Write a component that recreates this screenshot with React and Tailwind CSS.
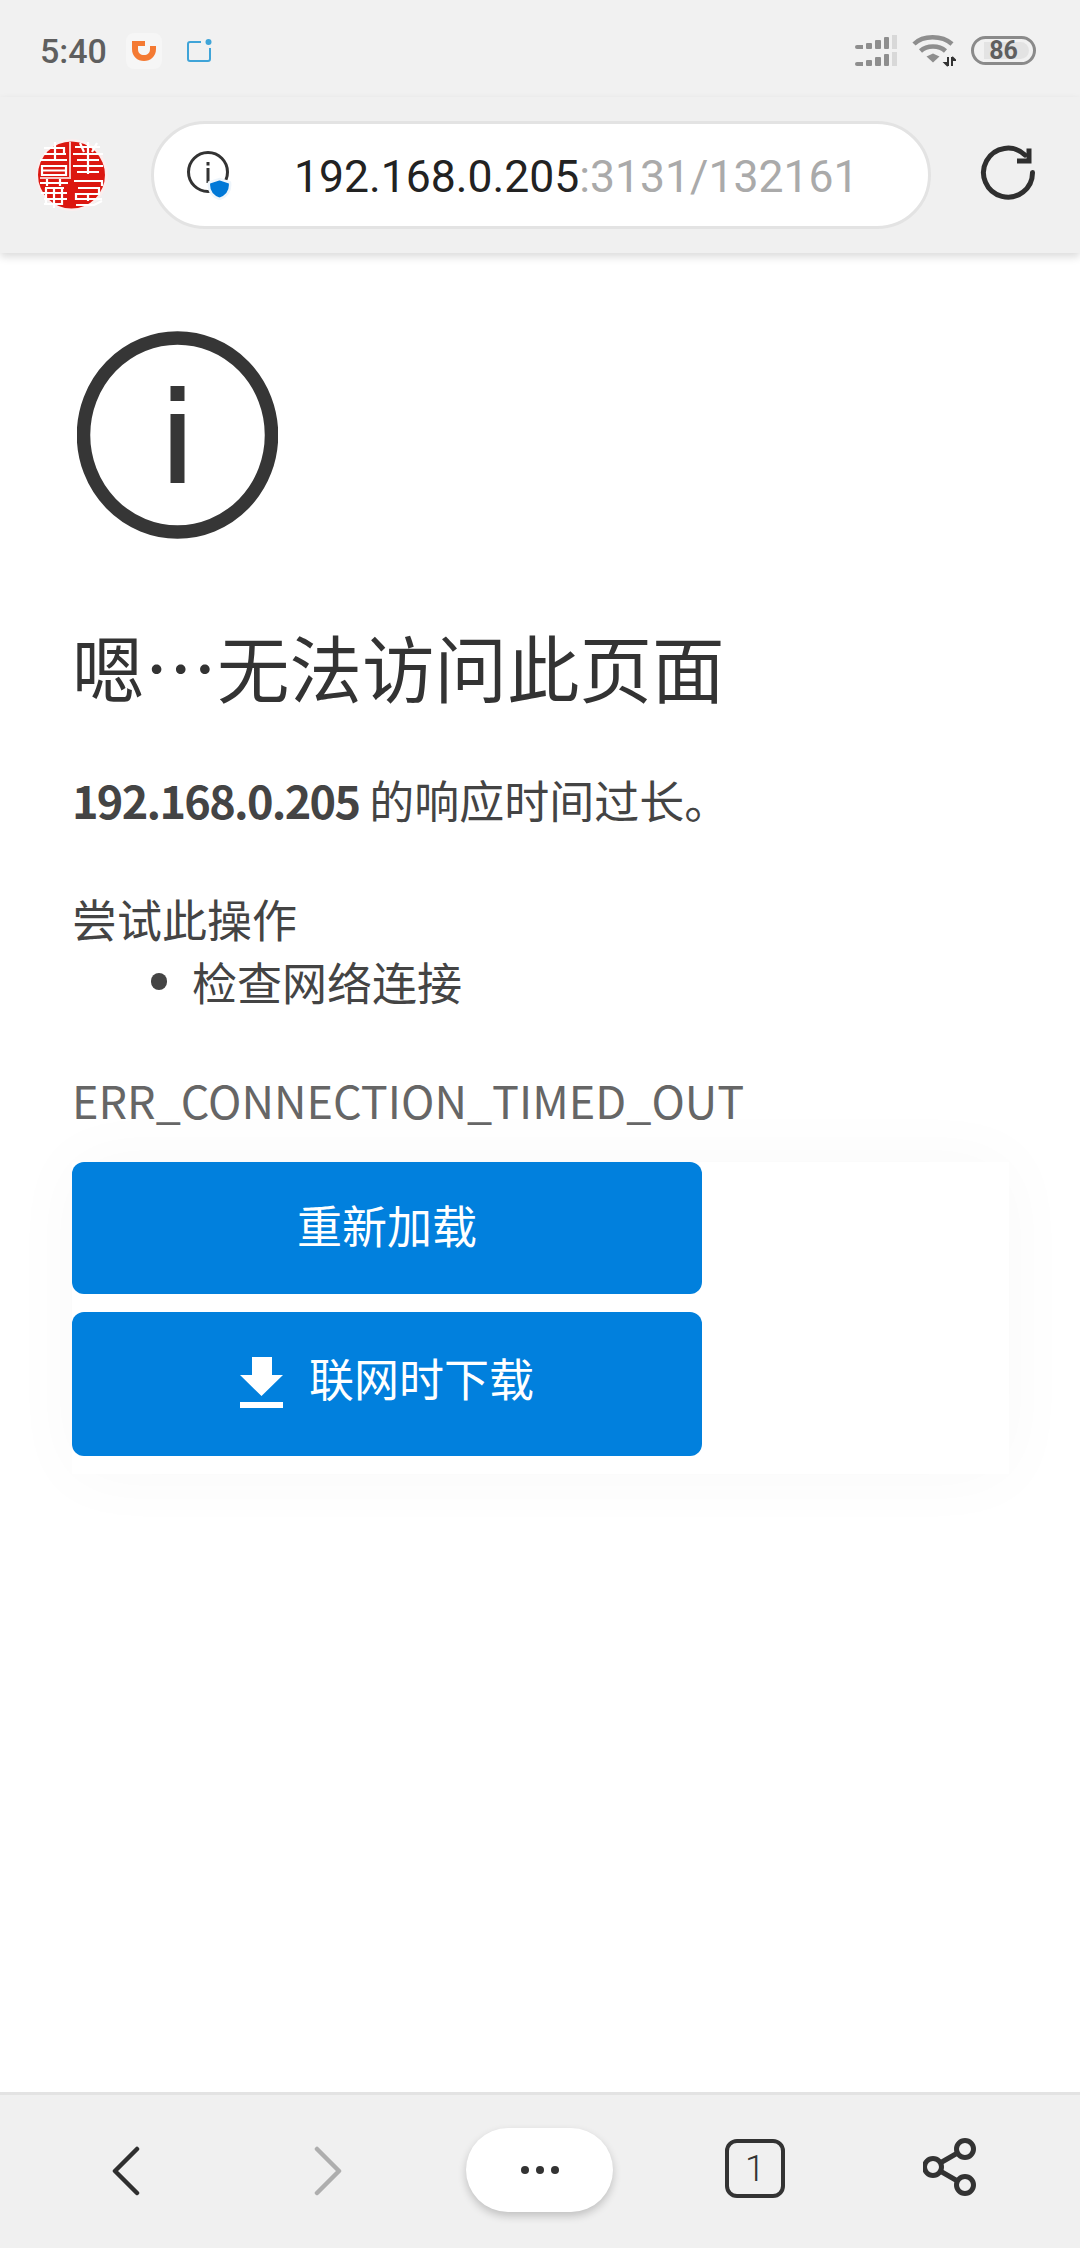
const cjk = "font-['Noto_Sans_CJK_SC','Noto_Sans',sans-serif]";

function SealLogo() {
  return (
    <svg width="72" height="72" viewBox="0 0 72 72" className="ml-[36px] shrink-0">
      <circle cx="36" cy="36" r="36" fill="#fbeeee" />
      <circle cx="35.500" cy="36" r="33.500" fill="#dc1710" />
      <g stroke="#ffffff" strokeWidth="2.200" fill="none">
        <path d="M34 3V40M4 39H33" strokeWidth="1.500" />
        <path d="M8 15H30M4 21H31M8 9H28V15M19 3V21M6 27H30V36H6ZM6 31.500H30" />
        <path d="M39 8H64M37 15H67M41 21H63M37 27H67M41 33H63M52 3V35M44 4L48 13M61 4L56 13" />
        <path d="M4 44H32M9 49H28M5 54H31M8 60H31M8 65H26M11 40V47M24 40V47M10 49V66M18 49V69M26 49V66" />
        <path d="M38 42H66V47M42 49H63V55H40V60H66M40 66H58L66 62M52 55V62" />
      </g>
    </svg>
  );
}

function InfoShield() {
  return (
    <svg width="46" height="50" viewBox="0 0 46 50" className="ml-[32px] shrink-0">
      <circle cx="22" cy="22" r="19.500" fill="none" stroke="#333333" strokeWidth="3" />
      <rect x="20.500" y="12" width="3" height="3.500" fill="#333333" />
      <rect x="20.500" y="18" width="3" height="15" fill="#333333" />
      <path d="M33.500 29l10.500 3.500c1 8-2.500 13.500-10.500 16.500-8-3-11.500-8.500-10.500-16.500z" fill="#0078d7" stroke="#eef5fb" strokeWidth="2.500" />
    </svg>
  );
}

function SignalRow() {
  return (
    <div className="flex items-end gap-[3px]">
      <span className="w-[8px] h-[4px] rounded-l-sm bg-[#8e8e8e]" />
      <span className="w-[6px] h-[6px] rounded-[1px] bg-[#8e8e8e]" />
      <span className="w-[6px] h-[9px] rounded-[1px] bg-[#8e8e8e]" />
      <span className="w-[5px] h-[12px] rounded-[1px] bg-[#8e8e8e]" />
      <span className="w-[5px] h-[14px] bg-[#d8d8d8]" />
    </div>
  );
}

function Wifi() {
  return (
    <svg width="44" height="34" viewBox="0 0 44 34" className="shrink-0">
      <g fill="none" stroke="#8e8e8e" strokeWidth="4.500">
        <path d="M2 10C11 1 30 1 40 10" />
        <path d="M8.500 17C15 11 27 11 33.500 17" />
      </g>
      <path d="M21 19.500l-6.500 3 6.500 6 6.500-6z" fill="#8e8e8e" />
      <path d="M36 23v9M36 32l-3-3h3M40 32v-9M40 23l3 3h-3" fill="none" stroke="#333333" strokeWidth="2" />
    </svg>
  );
}

function Reload() {
  return (
    <svg width="60" height="60" viewBox="0 0 60 60" className="shrink-0">
      <path d="M53.500 27.500a24.500 24.500 0 1 1-7.500-17.500" fill="none" stroke="#2f2f2f" strokeWidth="5" strokeLinecap="round" />
      <path d="M50 3.500V16H38" fill="none" stroke="#2f2f2f" strokeWidth="5" strokeLinejoin="miter" />
    </svg>
  );
}

function Chevron({ points, color }) {
  return (
    <svg width="30" height="50" viewBox="0 0 30 50" className="shrink-0">
      <polyline points={points} fill="none" stroke={color} strokeWidth="4.500" strokeLinecap="round" strokeLinejoin="round" />
    </svg>
  );
}

function Share() {
  return (
    <svg width="56" height="60" viewBox="0 0 56 60" className="shrink-0">
      <g fill="none" stroke="#333333" strokeWidth="5">
        <circle cx="42" cy="12" r="8.500" />
        <circle cx="10" cy="30" r="8.500" />
        <circle cx="42" cy="48" r="8.500" />
        <path d="M18 25.500L34.500 16M18 34.500L34.500 44" />
      </g>
    </svg>
  );
}

function DownloadIcon() {
  return (
    <svg width="43" height="51" viewBox="0 0 43 51" className="shrink-0 mt-[10px]">
      <path d="M12 0H32V18H43L21.500 39L0 18H12Z" fill="#ffffff" />
      <rect x="0" y="45" width="43" height="6" fill="#ffffff" />
    </svg>
  );
}

export default function App() {
  return (
    <div className={`w-[1080px] h-[2248px] flex flex-col bg-white overflow-hidden ${cjk}`}>
      {/* status bar */}
      <div className="h-[97px] shrink-0 bg-[#f1f1f1] flex items-center justify-between pl-[40px] pr-[42px] pt-[4px]">
        <div className="flex items-center">
          <span className="font-['Roboto',sans-serif] font-medium text-[34px] leading-none text-[#5f5f5f] w-[86px]">5:40</span>
          <div className="w-[36px] h-[36px] rounded-lg bg-[#f6f6f6] flex items-center justify-center">
            <svg width="26" height="22" viewBox="0 0 26 22">
              <path d="M1 1H14V6H7V9C7 13 9.500 15 13 15C16.500 15 19 13 19 9V6H25V9C25 16.500 19.500 21 13 21C6.500 21 1 16.500 1 9Z" fill="#f47a33" />
            </svg>
          </div>
          <svg width="26" height="24" viewBox="0 0 26 24" className="ml-[24px]">
            <path d="M15 3H4a2 2 0 0 0-2 2v15a2 2 0 0 0 2 2h18a2 2 0 0 0 2-2V9" fill="none" stroke="#3fa4d8" strokeWidth="2" />
            <circle cx="22.500" cy="3" r="3" fill="#3fa4d8" />
          </svg>
        </div>
        <div className="flex items-center mr-[2px]">
          <div className="flex flex-col gap-[3px]">
            <SignalRow />
            <SignalRow />
          </div>
          <div className="ml-[15px]">
            <Wifi />
          </div>
          <div className="ml-[15px] w-[65px] h-[29px] rounded-full border-[3px] border-[#8a8a8a] flex items-center justify-center relative">
            <div className="absolute left-[10px] right-[4px] top-[3px] bottom-[3px] rounded-r-full bg-[#e3e3e3]" />
            <span className="relative font-['Roboto',sans-serif] font-bold text-[25px] leading-none text-[#5f5f5f]">86</span>
          </div>
        </div>
      </div>

      {/* toolbar */}
      <div className="h-[156px] shrink-0 bg-[#f0f0f0] shadow-[0_4px_8px_rgba(0,0,0,0.14)] relative z-10 flex items-start pt-[24px]">
        <div className="h-[108px] flex items-center">
          <SealLogo />
        </div>
        <div className="ml-[43px] w-[780px] h-[108px] bg-white border-[3px] border-[#e3e3e3] rounded-full flex items-center">
          <InfoShield />
          <div className="ml-[62px] pt-[4px] font-['Roboto',sans-serif] text-[44.500px] leading-none whitespace-nowrap">
            <span className="text-[#222222]">192.168.0.205</span>
            <span className="text-[#aaaaaa]">:3131/132161</span>
          </div>
        </div>
        <div className="ml-[48px] h-[108px] flex items-center">
          <Reload />
        </div>
      </div>

      {/* error page */}
      <div className="flex-1 pl-[72px]">
        <svg width="201" height="208" viewBox="0 0 201 208" className="mt-[78px] ml-[5px] block">
          <ellipse cx="100.500" cy="104" rx="94" ry="97" fill="none" stroke="#363636" strokeWidth="13.500" />
          <rect x="93.500" y="55" width="14" height="15" fill="#363636" />
          <rect x="93.500" y="83" width="14" height="69" fill="#363636" />
        </svg>
        <h1 className="mt-[87px] h-[80px] text-[72.500px] leading-[80px] font-normal text-[#333333] whitespace-nowrap">
          嗯…无法访问此页面
        </h1>
        <p className="mt-[64px] h-[60px] text-[45px] leading-[60px] font-normal text-[#444444] whitespace-nowrap">
          <span className="font-bold tracking-[-1.700px]">192.168.0.205</span> 的响应时间过长。
        </p>
        <p className="mt-[57px] h-[63px] text-[45px] leading-[63px] font-normal text-[#444444]">尝试此操作</p>
        <div className="h-[63px] flex items-center text-[45px] leading-[63px] font-normal text-[#444444]">
          <span className="ml-[79px] w-[16px] h-[17px] rounded-full bg-[#444444]" />
          <span className="ml-[25px]">检查网络连接</span>
        </div>
        <p className="mt-[55px] h-[63px] text-[45px] leading-[63px] font-normal text-[#666666] whitespace-nowrap">ERR_CONNECTION_TIMED_OUT</p>
        <div className="mt-[31px] w-[937px] h-[312px] bg-white shadow-[0_0_70px_rgba(0,0,0,0.03)] flex flex-col gap-[18px]">
          <button className="w-[630px] h-[132px] rounded-xl bg-[#0180dd] text-white text-[45px] leading-none font-normal pb-[8px] flex items-center justify-center">
            重新加载
          </button>
          <button className="w-[630px] h-[144px] rounded-xl bg-[#0180dd] text-white text-[45px] leading-none font-normal pb-[14px] flex items-center justify-center">
            <DownloadIcon />
            <span className="ml-[26px]">联网时下载</span>
          </button>
        </div>
      </div>

      {/* bottom bar */}
      <div className="h-[156px] shrink-0 bg-[#f0f0f0] border-t-[3px] border-[#e3e3e3] relative flex items-start pt-[33px]">
        <div className="absolute left-[112px] top-[51px]">
          <Chevron points="25,3 3,25 25,47" color="#2f2f2f" />
        </div>
        <div className="absolute left-[312px] top-[51px]">
          <Chevron points="5,3 27,25 5,47" color="#aeaeae" />
        </div>
        <div className="ml-[466px] w-[147px] h-[84px] rounded-full bg-white shadow-[0_4px_8px_rgba(0,0,0,0.2)] flex items-center justify-center gap-[7px]">
          <span className="w-[8px] h-[8px] rounded-full bg-[#333333]" />
          <span className="w-[8px] h-[8px] rounded-full bg-[#333333]" />
          <span className="w-[8px] h-[8px] rounded-full bg-[#333333]" />
        </div>
        <div className="ml-[112px] mt-[11px] w-[60px] h-[59px] rounded-[12px] border-[4px] border-[#333333] flex items-center justify-center font-['Roboto',sans-serif] font-light text-[36px] leading-none text-[#333333]">
          1
        </div>
        <div className="ml-[138px] mt-[9px]">
          <Share />
        </div>
      </div>
    </div>
  );
}
